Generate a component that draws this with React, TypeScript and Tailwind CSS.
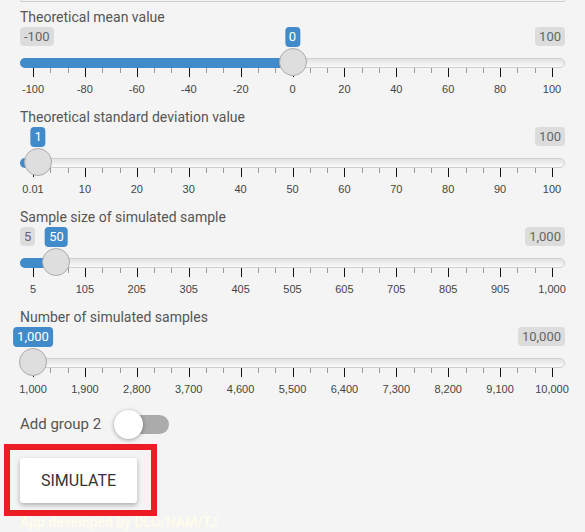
import React from 'react'

type SliderDef = {
  label: string
  frac: number
  valueLabel: string
  minLabel: string | null
  maxLabel: string
  ticks: string[]
}

const sliders: SliderDef[] = [
  {
    label: 'Theoretical mean value',
    frac: 0.5,
    valueLabel: '0',
    minLabel: '-100',
    maxLabel: '100',
    ticks: ['-100', '-80', '-60', '-40', '-20', '0', '20', '40', '60', '80', '100'],
  },
  {
    label: 'Theoretical standard deviation value',
    frac: 0.99 / 99.99,
    valueLabel: '1',
    minLabel: null,
    maxLabel: '100',
    ticks: ['0.01', '10', '20', '30', '40', '50', '60', '70', '80', '90', '100'],
  },
  {
    label: 'Sample size of simulated sample',
    frac: 45 / 995,
    valueLabel: '50',
    minLabel: '5',
    maxLabel: '1,000',
    ticks: ['5', '105', '205', '305', '405', '505', '605', '705', '805', '905', '1,000'],
  },
  {
    label: 'Number of simulated samples',
    frac: 0,
    valueLabel: '1,000',
    minLabel: null,
    maxLabel: '10,000',
    ticks: ['1,000', '1,900', '2,800', '3,700', '4,600', '5,500', '6,400', '7,300', '8,200', '9,100', '10,000'],
  },
]

// thumb centre along the grid (grid is inset 13px each side of the track)
const pos = (frac: number) => `calc(13px + ${frac} * (100% - 26px))`

function Slider({ s }: { s: SliderDef }) {
  const minors: number[] = []
  for (let k = 0; k < 10; k++) {
    minors.push(k * 10 + 10 / 3, k * 10 + 20 / 3)
  }

  return (
    <div className="relative h-[80px]">
      <div className="flex h-[20px] items-start justify-between">
        {s.minLabel ? (
          <span className="rounded-[4px] bg-[#dcdcdc] px-[4px] text-[13px] leading-[19px] text-[#666]">
            {s.minLabel}
          </span>
        ) : (
          <span />
        )}
        <span className="rounded-[4px] bg-[#dcdcdc] px-[4px] text-[13px] leading-[19px] text-[#666]">
          {s.maxLabel}
        </span>
      </div>

      <span
        className="absolute top-0 -translate-x-1/2 rounded-[4px] bg-[#428bca] px-[4px] text-[13px] leading-[20px] text-white"
        style={{ left: pos(s.frac) }}
      >
        {s.valueLabel}
      </span>

      <div className="relative mt-[11px] h-[10px] rounded-full border border-[#cfcfcf] bg-gradient-to-b from-[#e2e2e2] to-[#fafafa]">
        <div
          className="absolute -top-px -bottom-px -left-px rounded-l-full bg-[#428bca]"
          style={{ width: pos(s.frac) }}
        />
      </div>

      <div className="relative mx-[13px] h-[9px]">
        {s.ticks.map((_, i) => (
          <span
            key={'M' + i}
            className="absolute top-0 h-[9px] w-px bg-[#111]"
            style={{ left: `${i * 10}%` }}
          />
        ))}
        {minors.map((m, i) => (
          <span
            key={'m' + i}
            className="absolute top-0 h-[5px] w-px bg-[#999]"
            style={{ left: `${m}%` }}
          />
        ))}
      </div>

      <div className="relative mx-[13px] mt-[6px] h-[13px] font-['Liberation_Sans',Arial,sans-serif] text-[11px] leading-[13px] text-[#444]">
        {s.ticks.map((t, i) => (
          <span
            key={t}
            className="absolute top-0 -translate-x-1/2 whitespace-nowrap"
            style={{ left: `${i * 10}%` }}
          >
            {t}
          </span>
        ))}
      </div>

      <div
        className="absolute top-[21px] h-[28px] w-[28px] -translate-x-1/2 rounded-full border border-[#ababab] bg-[#dedede]"
        style={{ left: pos(s.frac) }}
      />
    </div>
  )
}

export default function App() {
  return (
    <div className="min-h-[532px] w-full overflow-hidden bg-[#f4f4f4] font-['Roboto','Helvetica_Neue',Arial,sans-serif]">
      <div className="px-[20px]">
        <div className="h-[2px] rounded-b-[3px] border-x border-b border-[#cccccc]" />

        <div className="mt-[5px]">
          {sliders.map((s) => (
            <div key={s.label}>
              <p className="h-[20px] text-[14px] leading-[20px] text-[#555]">{s.label}</p>
              <Slider s={s} />
            </div>
          ))}
        </div>

        <div className="mt-[2px] flex h-[30px] items-center gap-[13px]">
          <span className="text-[15px] leading-[20px] text-[#555]">Add group 2</span>
          <div className="relative h-[30px] w-[55px]">
            <div className="absolute top-[6px] right-0 left-[5px] h-[19px] rounded-full bg-[#ababab]" />
            <div className="absolute top-px left-0 h-[29px] w-[29px] rounded-full bg-white shadow-[0_1px_4px_rgba(0,0,0,0.35)]" />
          </div>
        </div>

        <div className="relative">
          <button className="mt-[19px] flex h-[45px] w-[117px] items-center justify-center rounded-[3px] bg-white text-[16px] text-[#333] shadow-[0_2px_5px_rgba(0,0,0,0.3)]">
            SIMULATE
          </button>
          <p className="mt-[9px] text-[14px] font-medium leading-[20px] text-[#fffdea]">
            App developed by DLO/NAM/TJ
          </p>
          <div className="absolute top-[-14px] left-[-16px] h-[72px] w-[153px] border-[6px] border-[#ed1c24]" />
        </div>
      </div>
    </div>
  )
}
